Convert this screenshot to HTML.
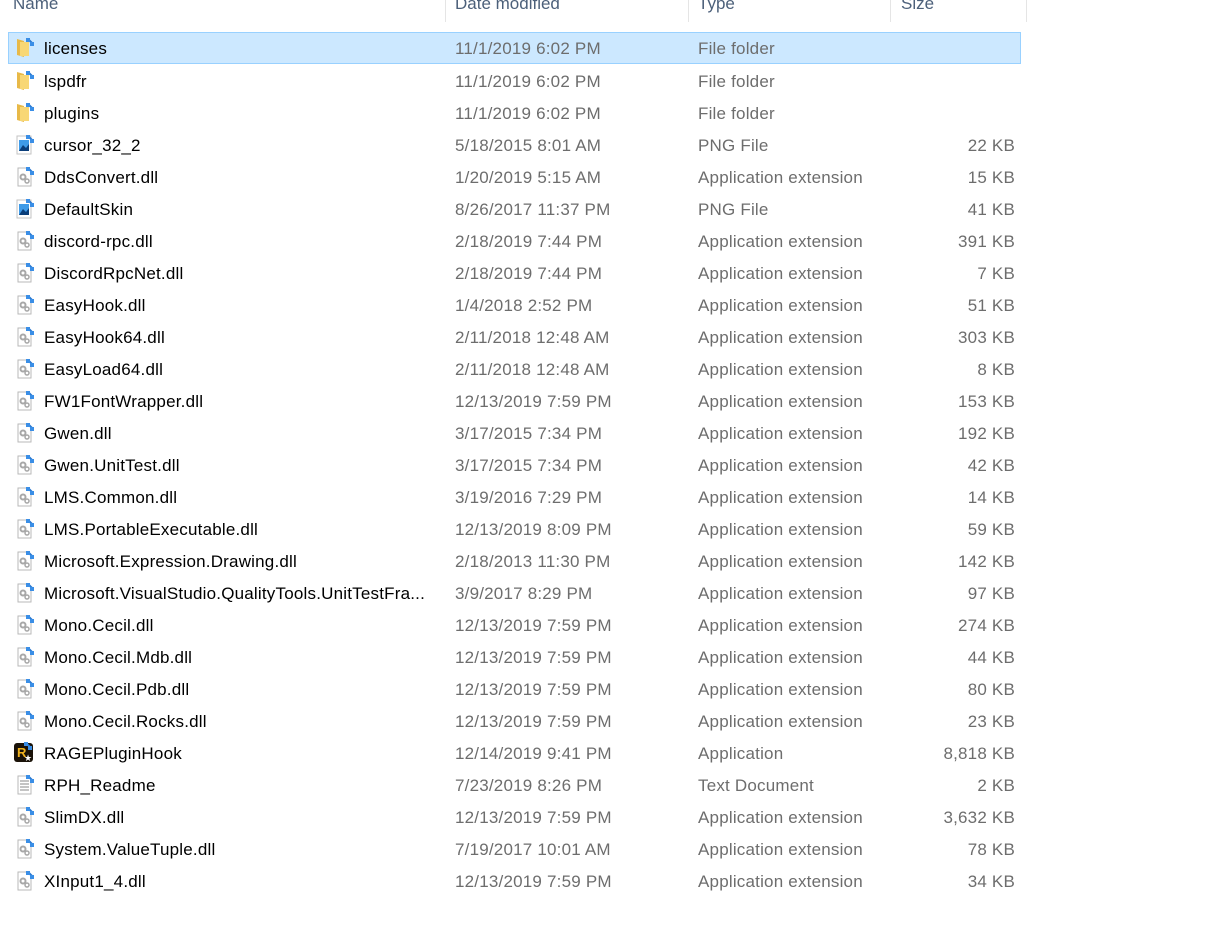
<!DOCTYPE html>
<html><head><meta charset="utf-8">
<style>
html,body{margin:0;padding:0;background:#fff;width:1215px;height:931px;overflow:hidden;position:relative;font-family:"Segoe UI","Liberation Sans",sans-serif;font-size:17px;}
.h{position:absolute;top:-6px;color:#4c607a;font-size:17px;}
.sep{position:absolute;top:0;width:1px;height:22px;background:#e5e5e5;}
.row{position:absolute;left:8px;width:1013px;height:32px;}
.sel{background:#cce8ff;border:1px solid #99d1ff;box-sizing:border-box;}
.row span{position:absolute;top:6px;line-height:22px;white-space:nowrap;letter-spacing:0.2px;}
.n{left:36px;color:#000;}
.d{left:447px;color:#6d6d6d;}
.t{left:690px;color:#6d6d6d;}
.s{right:6px;color:#6d6d6d;text-align:right;}
.row svg{position:absolute;left:8px;top:6px;}
</style></head><body>
<div class="h" style="left:13px">Name</div>
<div class="h" style="left:455px">Date modified</div>
<div class="h" style="left:698px">Type</div>
<div class="h" style="left:901px">Size</div>
<div class="sep" style="left:445px"></div>
<div class="sep" style="left:688px"></div>
<div class="sep" style="left:890px"></div>
<div class="sep" style="left:1026px"></div>

<svg width="0" height="0" style="position:absolute">
<defs>
<g id="arr"><path d="M12 1 L16 5" stroke="#2b79d0" stroke-width="2"/><rect x="10" y="0" width="4" height="4" fill="#3a8ee6"/><rect x="14" y="4" width="4" height="4" fill="#3a8ee6"/></g>
<g id="fold"><path d="M1 1 L8 3 L8 19 L1 17Z" fill="#e8b948"/><path d="M4 4 L13 4 L13 18 L4 18Z" fill="#f8d775"/><use href="#arr"/></g>
<g id="dll"><path d="M2 1 L12 1 L15 4 L15 19 L2 19Z" fill="#fff" stroke="#b9b9b9"/><circle cx="7" cy="10" r="2.5" fill="none" stroke="#a8a8a8" stroke-width="2"/><circle cx="11" cy="14" r="2" fill="none" stroke="#a8a8a8" stroke-width="1.5"/><use href="#arr"/></g>
<g id="png"><path d="M1 1 L15 1 L15 19 L1 19Z" fill="#fff" stroke="#c3c3c3"/><rect x="3" y="5" width="10" height="11" fill="#3f9be8"/><path d="M3 16 L7 10 L10 13 L13 9 L13 16Z" fill="#0b3e7a"/><use href="#arr"/></g>
<g id="txt"><path d="M2 1 L12 1 L15 4 L15 19 L2 19Z" fill="#fff" stroke="#b9b9b9"/><path d="M4 6H13M4 9H13M4 12H13M4 15H13" stroke="#8a8a8a"/><use href="#arr"/></g>
<g id="app"><rect x="0" y="1" width="19" height="19" rx="3" fill="#1a1208"/><text x="3" y="15" font-size="13" font-weight="bold" fill="#f0b21e" font-family="Liberation Sans">R</text><text x="10" y="19" font-size="9" fill="#fff" font-family="DejaVu Sans">★</text><use href="#arr"/></g>
</defs></svg>

<div class="row sel" style="top:32px"><svg width="20" height="20" style="left:7px;top:5px"><use href="#fold"/></svg><span class="n" style="left:35px;top:5px">licenses</span><span class="d" style="left:446px;top:5px">11/1/2019 6:02 PM</span><span class="t" style="left:689px;top:5px">File folder</span></div>
<div class="row" style="top:65px"><svg width="20" height="20"><use href="#fold"/></svg><span class="n">lspdfr</span><span class="d">11/1/2019 6:02 PM</span><span class="t">File folder</span></div>
<div class="row" style="top:97px"><svg width="20" height="20"><use href="#fold"/></svg><span class="n">plugins</span><span class="d">11/1/2019 6:02 PM</span><span class="t">File folder</span></div>
<div class="row" style="top:129px"><svg width="20" height="20"><use href="#png"/></svg><span class="n">cursor_32_2</span><span class="d">5/18/2015 8:01 AM</span><span class="t">PNG File</span><span class="s">22 KB</span></div>
<div class="row" style="top:161px"><svg width="20" height="20"><use href="#dll"/></svg><span class="n">DdsConvert.dll</span><span class="d">1/20/2019 5:15 AM</span><span class="t">Application extension</span><span class="s">15 KB</span></div>
<div class="row" style="top:193px"><svg width="20" height="20"><use href="#png"/></svg><span class="n">DefaultSkin</span><span class="d">8/26/2017 11:37 PM</span><span class="t">PNG File</span><span class="s">41 KB</span></div>
<div class="row" style="top:225px"><svg width="20" height="20"><use href="#dll"/></svg><span class="n">discord-rpc.dll</span><span class="d">2/18/2019 7:44 PM</span><span class="t">Application extension</span><span class="s">391 KB</span></div>
<div class="row" style="top:257px"><svg width="20" height="20"><use href="#dll"/></svg><span class="n">DiscordRpcNet.dll</span><span class="d">2/18/2019 7:44 PM</span><span class="t">Application extension</span><span class="s">7 KB</span></div>
<div class="row" style="top:289px"><svg width="20" height="20"><use href="#dll"/></svg><span class="n">EasyHook.dll</span><span class="d">1/4/2018 2:52 PM</span><span class="t">Application extension</span><span class="s">51 KB</span></div>
<div class="row" style="top:321px"><svg width="20" height="20"><use href="#dll"/></svg><span class="n">EasyHook64.dll</span><span class="d">2/11/2018 12:48 AM</span><span class="t">Application extension</span><span class="s">303 KB</span></div>
<div class="row" style="top:353px"><svg width="20" height="20"><use href="#dll"/></svg><span class="n">EasyLoad64.dll</span><span class="d">2/11/2018 12:48 AM</span><span class="t">Application extension</span><span class="s">8 KB</span></div>
<div class="row" style="top:385px"><svg width="20" height="20"><use href="#dll"/></svg><span class="n">FW1FontWrapper.dll</span><span class="d">12/13/2019 7:59 PM</span><span class="t">Application extension</span><span class="s">153 KB</span></div>
<div class="row" style="top:417px"><svg width="20" height="20"><use href="#dll"/></svg><span class="n">Gwen.dll</span><span class="d">3/17/2015 7:34 PM</span><span class="t">Application extension</span><span class="s">192 KB</span></div>
<div class="row" style="top:449px"><svg width="20" height="20"><use href="#dll"/></svg><span class="n">Gwen.UnitTest.dll</span><span class="d">3/17/2015 7:34 PM</span><span class="t">Application extension</span><span class="s">42 KB</span></div>
<div class="row" style="top:481px"><svg width="20" height="20"><use href="#dll"/></svg><span class="n">LMS.Common.dll</span><span class="d">3/19/2016 7:29 PM</span><span class="t">Application extension</span><span class="s">14 KB</span></div>
<div class="row" style="top:513px"><svg width="20" height="20"><use href="#dll"/></svg><span class="n">LMS.PortableExecutable.dll</span><span class="d">12/13/2019 8:09 PM</span><span class="t">Application extension</span><span class="s">59 KB</span></div>
<div class="row" style="top:545px"><svg width="20" height="20"><use href="#dll"/></svg><span class="n">Microsoft.Expression.Drawing.dll</span><span class="d">2/18/2013 11:30 PM</span><span class="t">Application extension</span><span class="s">142 KB</span></div>
<div class="row" style="top:577px"><svg width="20" height="20"><use href="#dll"/></svg><span class="n">Microsoft.VisualStudio.QualityTools.UnitTestFra...</span><span class="d">3/9/2017 8:29 PM</span><span class="t">Application extension</span><span class="s">97 KB</span></div>
<div class="row" style="top:609px"><svg width="20" height="20"><use href="#dll"/></svg><span class="n">Mono.Cecil.dll</span><span class="d">12/13/2019 7:59 PM</span><span class="t">Application extension</span><span class="s">274 KB</span></div>
<div class="row" style="top:641px"><svg width="20" height="20"><use href="#dll"/></svg><span class="n">Mono.Cecil.Mdb.dll</span><span class="d">12/13/2019 7:59 PM</span><span class="t">Application extension</span><span class="s">44 KB</span></div>
<div class="row" style="top:673px"><svg width="20" height="20"><use href="#dll"/></svg><span class="n">Mono.Cecil.Pdb.dll</span><span class="d">12/13/2019 7:59 PM</span><span class="t">Application extension</span><span class="s">80 KB</span></div>
<div class="row" style="top:705px"><svg width="20" height="20"><use href="#dll"/></svg><span class="n">Mono.Cecil.Rocks.dll</span><span class="d">12/13/2019 7:59 PM</span><span class="t">Application extension</span><span class="s">23 KB</span></div>
<div class="row" style="top:737px"><svg width="20" height="21" style="left:6px;top:5px"><use href="#app"/></svg><span class="n">RAGEPluginHook</span><span class="d">12/14/2019 9:41 PM</span><span class="t">Application</span><span class="s">8,818 KB</span></div>
<div class="row" style="top:769px"><svg width="20" height="20"><use href="#txt"/></svg><span class="n">RPH_Readme</span><span class="d">7/23/2019 8:26 PM</span><span class="t">Text Document</span><span class="s">2 KB</span></div>
<div class="row" style="top:801px"><svg width="20" height="20"><use href="#dll"/></svg><span class="n">SlimDX.dll</span><span class="d">12/13/2019 7:59 PM</span><span class="t">Application extension</span><span class="s">3,632 KB</span></div>
<div class="row" style="top:833px"><svg width="20" height="20"><use href="#dll"/></svg><span class="n">System.ValueTuple.dll</span><span class="d">7/19/2017 10:01 AM</span><span class="t">Application extension</span><span class="s">78 KB</span></div>
<div class="row" style="top:865px"><svg width="20" height="20"><use href="#dll"/></svg><span class="n">XInput1_4.dll</span><span class="d">12/13/2019 7:59 PM</span><span class="t">Application extension</span><span class="s">34 KB</span></div>
</body></html>
